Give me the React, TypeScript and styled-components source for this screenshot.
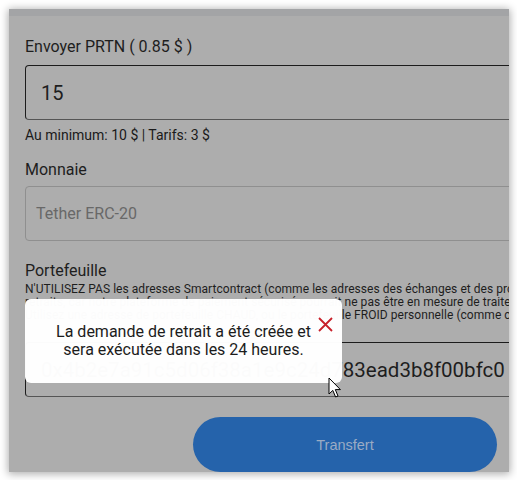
import React from "react";
import styled, { createGlobalStyle } from "styled-components";

const GlobalStyle = createGlobalStyle`
  html, body { margin: 0; padding: 0; background: #ffffff; }
  body {
    width: 517px;
    height: 480px;
    overflow: hidden;
    font-family: Roboto, "Noto Sans", Arial, sans-serif;
  }
  * { box-sizing: border-box; }
`;

const Stage = styled.div`
  width: 517px;
  height: 480px;
  padding: 9px 8px 8px 9px;
`;

const Panel = styled.div`
  position: relative;
  width: 500px;
  height: 463px;
  background: #adadad;
  box-shadow: 0 1px 8px 1px rgba(0, 0, 0, 0.32);
  overflow: hidden;
  display: flex;
  flex-direction: column;
`;

const TopBand = styled.div`
  flex: none;
  height: 7px;
  background: #a3a4a6;
`;

const Form = styled.div`
  flex: none;
  width: 672px;
  padding: 21px 16px 0 16px;
  display: flex;
  flex-direction: column;
`;

const Label = styled.div<{ $mt?: number }>`
  margin-top: ${(p) => p.$mt ?? 0}px;
  font-size: 16px;
  line-height: 19px;
  color: #1e1e1e;
  white-space: nowrap;
`;

const Field = styled.div<{ $mt: number; $disabled?: boolean; $pad?: number; $size?: number }>`
  margin-top: ${(p) => p.$mt}px;
  height: 55px;
  border: 1px solid ${(p) => (p.$disabled ? "#8f8f8f" : "#1c1c1c")};
  border-bottom-color: ${(p) => (p.$disabled ? "#8f8f8f" : "#555555")};
  border-radius: 4px;
  display: flex;
  align-items: center;
  padding-left: ${(p) => p.$pad ?? 15}px;
  font-size: ${(p) => p.$size ?? 20}px;
  color: ${(p) => (p.$disabled ? "#686868" : "#1e1e1e")};
  white-space: nowrap;
  overflow: hidden;
`;

const Helper = styled.div`
  margin-top: 7px;
  font-size: 14px;
  line-height: 17px;
  color: #1a1a1a;
  white-space: nowrap;
`;

const Warning = styled.div`
  margin-top: 3px;
  display: flex;
  flex-direction: column;
  font-size: 12px;
  line-height: 13px;
  letter-spacing: 0.05px;
  color: #1e1e1e;
`;

const WarningLine = styled.span`
  white-space: nowrap;
`;

const SubmitButton = styled.button`
  align-self: center;
  margin-top: 20px;
  width: 304px;
  height: 55px;
  border: none;
  border-radius: 28px;
  background: #2563ab;
  color: #9aabc4;
  font-family: "Liberation Sans", Arial, sans-serif;
  font-size: 14.5px;
  cursor: pointer;
`;

const Popup = styled.div`
  position: absolute;
  left: 16px;
  top: 290px;
  width: 317px;
  height: 84px;
  background: rgba(255, 255, 255, 0.985);
  border-radius: 6px;
  display: flex;
  align-items: center;
  justify-content: center;
  padding: 0 12px;
`;

const PopupText = styled.p`
  margin: 0;
  text-align: center;
  font-size: 16px;
  line-height: 18px;
  color: #1c1c1c;
`;

const CloseButton = styled.button`
  position: absolute;
  left: 292px;
  top: 17px;
  width: 17px;
  height: 17px;
  padding: 0;
  border: none;
  background: transparent;
  display: flex;
  cursor: pointer;
`;

const Cursor = styled.svg`
  position: absolute;
  left: 319px;
  top: 368px;
  width: 14px;
  height: 22px;
  pointer-events: none;
`;

export default function App() {
  return (
    <>
      <GlobalStyle />
      <Stage>
        <Panel>
          <TopBand />
          <Form>
            <Label>Envoyer PRTN ( 0.85 $ )</Label>
            <Field $mt={9}>15</Field>
            <Helper>Au minimum: 10 $ | Tarifs: 3 $</Helper>
            <Label $mt={16}>Monnaie</Label>
            <Field $mt={7} $disabled $pad={10} $size={16}>
              Tether ERC-20
            </Field>
            <Label $mt={20}>Portefeuille</Label>
            <Warning>
              <WarningLine>
                N'UTILISEZ PAS les adresses Smartcontract (comme les adresses des échanges et des projets DeFi) pour les
              </WarningLine>
              <WarningLine>
                retraits, car notre plateforme de paiement sécurisé pourrait ne pas être en mesure de traiter ces transactions.
              </WarningLine>
              <WarningLine>
                Utilisez une adresse de portefeuille CHAUD, ou le portefeuille FROID personnelle (comme celle de MetaMask).
              </WarningLine>
            </Warning>
            <Field $mt={20} $size={20.5}>
              0x4b2e7a91c5d06f38a1e9c24d783ead3b8f00bfc0
            </Field>
            <SubmitButton>Transfert</SubmitButton>
          </Form>

          <Popup>
            <PopupText>
              La demande de retrait a été créée et
              <br />
              sera exécutée dans les 24 heures.
            </PopupText>
            <CloseButton aria-label="Fermer">
              <svg width="17" height="17" viewBox="0 0 17 17">
                <path d="M2 2 L15 15 M15 2 L2 15" stroke="#c8202a" strokeWidth="1.8" fill="none" />
              </svg>
            </CloseButton>
          </Popup>

          <Cursor viewBox="0 0 14 22">
            <path
              d="M1 1 L1 17 L4.8 13.4 L7.6 20 L10 19 L7.3 12.6 L12.4 12.6 Z"
              fill="#ffffff"
              stroke="#000000"
              strokeWidth="1"
              strokeLinejoin="round"
            />
          </Cursor>
        </Panel>
      </Stage>
    </>
  );
}
